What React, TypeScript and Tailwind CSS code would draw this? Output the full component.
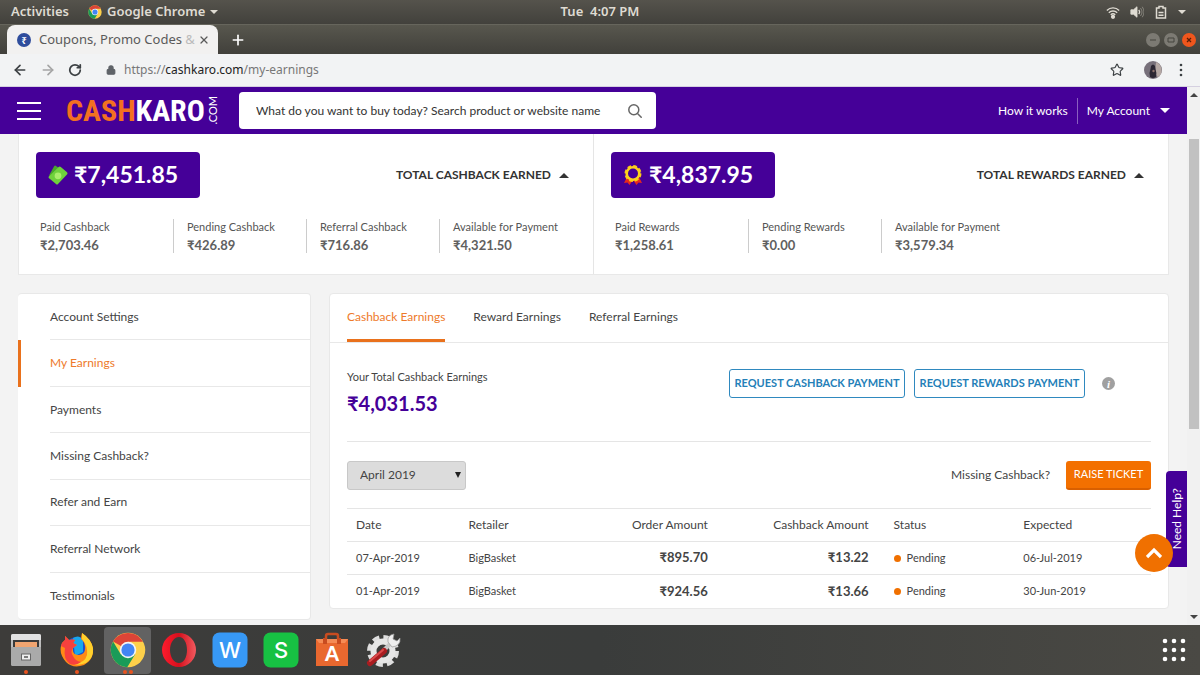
import React, { useState } from 'react';
import { ArrowLeft, ArrowRight, Lock, Plus, RotateCw, Star, X } from 'lucide-react';

type Stat = {
  label: string;
  value: string;
};

type Earning = {
  date: string;
  retailer: string;
  order: string;
  cashback: string;
  status: string;
  expected: string;
};

const cashbackStats: Stat[] = [
  { label: 'Paid Cashback', value: '₹2,703.46' },
  { label: 'Pending Cashback', value: '₹426.89' },
  { label: 'Referral Cashback', value: '₹716.86' },
  { label: 'Available for Payment', value: '₹4,321.50' },
];

const rewardStats: Stat[] = [
  { label: 'Paid Rewards', value: '₹1,258.61' },
  { label: 'Pending Rewards', value: '₹0.00' },
  { label: 'Available for Payment', value: '₹3,579.34' },
];

const menuItems = [
  'Account Settings',
  'My Earnings',
  'Payments',
  'Missing Cashback?',
  'Refer and Earn',
  'Referral Network',
  'Testimonials',
];

const tabs = ['Cashback Earnings', 'Reward Earnings', 'Referral Earnings'];

const earnings: Earning[] = [
  { date: '07-Apr-2019', retailer: 'BigBasket', order: '₹895.70', cashback: '₹13.22', status: 'Pending', expected: '06-Jul-2019' },
  { date: '01-Apr-2019', retailer: 'BigBasket', order: '₹924.56', cashback: '₹13.66', status: 'Pending', expected: '30-Jun-2019' },
];

const Caret = ({ className, up }: { className: string; up?: boolean }) => (
  <svg className={className} viewBox="0 0 10 5" fill="currentColor" aria-hidden="true">
    <path d={up ? 'M0 5 5 0l5 5z' : 'M0 0h10L5 5z'} />
  </svg>
);

const ChromeLogo = ({ className }: { className: string }) => (
  <svg className={className} viewBox="0 0 48 48" aria-hidden="true">
    <circle cx="24" cy="24" r="23" fill="#fdd04a" />
    <path d="M24 24 4.1 12.5A23 23 0 0 1 43.9 13H24z" fill="#dc4437" />
    <path d="M4.1 12.5A23 23 0 0 0 23 47l10.5-17.5L24 24 14.5 30z" fill="#1a9b58" />
    <circle cx="24" cy="24" r="11" fill="#f4f4f4" />
    <circle cx="24" cy="24" r="8.800" fill="#4285f4" />
  </svg>
);

const SystemBar = () => (
  <div className="grid h-6 grid-cols-3 items-center bg-linear-to-b from-[#55534c] to-[#42413c] px-[11px] text-[13px] font-semibold text-[#dfdbd2]">
    <div className="flex items-center gap-[19px]">
      <button>Activities</button>
      <button className="flex items-center gap-[5px]">
        <ChromeLogo className="h-3.5 w-3.5" />
        Google Chrome
        <Caret className="h-1 w-2" />
      </button>
    </div>
    <time className="text-center whitespace-pre">Tue  4:07 PM</time>
    <div className="flex items-center justify-end gap-2.5 pr-[3px]">
      <svg className="h-3.5 w-3.5" viewBox="0 0 16 16" fill="none" stroke="currentColor" strokeWidth="1.600" aria-label="Wi-Fi">
        <path d="M1 6.200a10 10 0 0 1 14 0M3.200 8.800a7 7 0 0 1 9.600 0M5.400 11.200a4 4 0 0 1 5.200 0" />
        <circle cx="8" cy="13.500" r="1.600" fill="currentColor" />
      </svg>
      <svg className="h-3.5 w-3.5" viewBox="0 0 16 16" fill="none" stroke="currentColor" aria-label="Volume">
        <path d="M1 5.500h3L8 2v12l-4-3.500H1z" fill="currentColor" />
        <path d="M10 5.500q2 2.500 0 5" strokeWidth="1.400" />
        <path d="M12 3.500q3.500 4.500 0 9M14 2q4 6 0 12" opacity=".45" />
      </svg>
      <svg className="h-3.5 w-3.5" viewBox="0 0 14 14" fill="none" stroke="currentColor" strokeWidth="1.500" aria-label="Battery">
        <path d="M2.500 3H5V1.500h4V3h2.500v10h-9zM4.500 7.500h5M4.500 10.250h5" />
      </svg>
      <Caret className="h-1 w-2" />
    </div>
  </div>
);

const TabStrip = () => (
  <div className="flex h-[30px] items-stretch border-t border-[#66655c] bg-linear-to-b from-[#58574e] to-[#41403b] pr-1 pl-[7px]">
    <div className="flex w-[211px] items-center rounded-t-lg bg-[#f2f1f0] pr-2 pl-2.5 text-[#5a5a5a]">
      <svg className="h-3.5 w-3.5 shrink-0" viewBox="0 0 14 14" aria-hidden="true">
        <circle cx="7" cy="7" r="7" fill="#2f4d9c" />
        <text x="7" y="10.500" textAnchor="middle" fontSize="9" fontWeight="700" fill="#fff">₹</text>
      </svg>
      <span className="ml-2 min-w-0 flex-1 overflow-hidden text-[13px] whitespace-nowrap">
        Coupons, Promo Codes <span className="text-[#bbb]">&amp;</span>
      </span>
      <button aria-label="Close tab">
        <X className="h-3 w-3" strokeWidth={2.5} />
      </button>
    </div>
    <button className="ml-3 text-white" aria-label="New tab">
      <Plus className="h-4 w-4" strokeWidth={2.5} />
    </button>
    <div className="ml-auto flex items-center gap-1">
      <button className="flex h-3.5 w-3.5 items-center justify-center rounded-full bg-[#7c7a73] text-[#45443f]" aria-label="Minimize">
        <svg className="h-2 w-2" viewBox="0 0 8 8" stroke="currentColor"><path d="M1 4h6" /></svg>
      </button>
      <button className="flex h-3.5 w-3.5 items-center justify-center rounded-full bg-[#7c7a73] text-[#45443f]" aria-label="Maximize">
        <svg className="h-2 w-2" viewBox="0 0 8 8" fill="none" stroke="currentColor"><path d="M1 2h6v4H1z" /></svg>
      </button>
      <button className="flex h-3.5 w-3.5 items-center justify-center rounded-full bg-[#f0561d] text-[#5a1d06]" aria-label="Close">
        <svg className="h-2 w-2" viewBox="0 0 8 8" stroke="currentColor" strokeWidth="1.300"><path d="m2 2 4 4M6 2 2 6" /></svg>
      </button>
    </div>
  </div>
);

const Toolbar = () => (
  <div className="flex h-[33px] items-center border-b border-[#d5d0e0] bg-[#f2f3f4] px-3 text-[#3c4043]">
    <button aria-label="Back"><ArrowLeft className="h-4 w-4" strokeWidth={2.5} /></button>
    <button className="ml-3 text-[#a5a5a5]" aria-label="Forward"><ArrowRight className="h-4 w-4" strokeWidth={2.5} /></button>
    <button className="ml-3" aria-label="Reload"><RotateCw className="h-3.5 w-3.5" strokeWidth={3} /></button>
    <Lock className="ml-6 h-2.5 w-2.5 text-[#5f6368]" fill="currentColor" strokeWidth={3} />
    <div
      className="ml-2 flex-1 text-[12px] text-[#777]"
      role="textbox"
      aria-label="Address"
      contentEditable
      suppressContentEditableWarning
    >
      https://<span className="text-[#222]">cashkaro.com</span>/my-earnings
    </div>
    <button aria-label="Bookmark"><Star className="h-3.5 w-3.5" /></button>
    <button className="mr-3 ml-5" aria-label="Profile">
      <svg className="h-[18px] w-[18px]" viewBox="0 0 18 18">
        <circle cx="9" cy="9" r="9" fill="#77707a" />
        <path d="M12 1a9 9 0 0 1 2 15.500L11 12z" fill="#b5a8a4" />
        <path d="M7 5q2-3 4 0l.5 3q1.500 4 .5 8-3 2-6 0-1-5 .5-8z" fill="#2c2733" />
        <circle cx="9.500" cy="10" r="1.200" fill="#8b6f6b" />
      </svg>
    </button>
    <button aria-label="Menu">
      <svg className="h-3.5 w-3.5" viewBox="0 0 14 14" fill="currentColor">
        <circle cx="7" cy="2" r="1.300" />
        <circle cx="7" cy="7" r="1.300" />
        <circle cx="7" cy="12" r="1.300" />
      </svg>
    </button>
  </div>
);

const SiteHeader = () => (
  <header className="flex h-[47px] items-center bg-[#450098] px-[17px] text-[12px] text-white">
    <button className="flex w-6 flex-col gap-1.5" aria-label="Open menu">
      <span className="h-0.5 w-full bg-white" />
      <span className="h-0.5 w-full bg-white" />
      <span className="h-0.5 w-full bg-white" />
    </button>
    <a href="#home" className="ml-[25px] flex w-[153px] items-center justify-between" aria-label="CashKaro.com">
      <span className="font-['Roboto_Condensed','Open_Sans_Condensed','Liberation_Sans',sans-serif] text-[30px] leading-8 font-bold">
        <span className="text-[#f37021]">CASH</span>KARO
      </span>
      <span className="rotate-180 text-[11px] leading-3 [writing-mode:vertical-rl]">.COM</span>
    </a>
    <form className="ml-5 flex h-[37px] w-[417px] items-center rounded bg-white pr-3.5 pl-[17px]">
      <input
        type="search"
        aria-label="Search"
        placeholder="What do you want to buy today? Search product or website name"
        className="min-w-0 flex-1 bg-transparent text-[12px] outline-none placeholder:text-[#333]"
      />
      <button type="button" className="text-[#666]" aria-label="Submit search">
        <svg className="h-3.5 w-3.5" viewBox="0 0 14 14" fill="none" stroke="currentColor" strokeWidth="1.500">
          <circle cx="5.800" cy="5.800" r="5" />
          <path d="m9.500 9.500 4.200 4.200" />
        </svg>
      </button>
    </form>
    <nav className="ml-auto flex items-center">
      <a href="#how" className="pr-[9px]">How it works</a>
      <button className="flex h-[26px] items-center gap-2.5 border-l border-[#8a5fc0] pl-[9px]">
        My Account
        <Caret className="h-[5px] w-2.5" />
      </button>
    </nav>
  </header>
);

const MoneyIcon = () => (
  <svg className="h-5 w-5" viewBox="0 0 20 20" aria-hidden="true">
    <path d="M1 10.500 6 1.500q1-1.500 2-.5l3 2-6 9z" fill="#4aa52c" />
    <path d="M.8 11.500 11 1.800q1-.8 1.800.2l6.200 5.200q1 1 .2 2L10 19q-1 1-2 0l-7.200-6q-.6-.8 0-1.500z" fill="#6fd13c" />
    <circle cx="10" cy="10.800" r="3.400" fill="#a9ee6b" />
  </svg>
);

const RibbonIcon = () => (
  <svg className="h-5 w-5" viewBox="0 0 20 20" aria-hidden="true">
    <path d="m4 12-3 6 3.500-.5L6.500 20 10 15l3.500 5 2-2.500 3.500.5-3-6z" fill="#e8291c" />
    <circle cx="10" cy="8.500" r="7" fill="none" stroke="#fcc917" strokeWidth="3" strokeDasharray="3.500 2" />
    <circle cx="10" cy="8.500" r="6.300" fill="#450098" stroke="#fcd21d" strokeWidth="2.600" />
  </svg>
);

type SummaryProps = {
  icon: React.ReactNode;
  amount: string;
  title: string;
  stats: Stat[];
};

const Summary = ({ icon, amount, title, stats }: SummaryProps) => (
  <section className="min-w-0 flex-1 pt-[18px] pr-6 pb-[21px] pl-[17px]">
    <div className="flex items-center justify-between">
      <div className="flex h-[46px] w-[164px] items-center gap-1.5 rounded bg-[#450098] pl-3 text-white">
        {icon}
        <span className="pb-0.5 text-[23px] leading-8 font-bold">{amount}</span>
      </div>
      <button className="flex items-center gap-2 text-[12px] font-bold text-[#333]">
        {title}
        <Caret up className="h-[5px] w-2.5" />
      </button>
    </div>
    <dl className="mt-[21px] flex pl-1">
      {stats.map((stat, i) => (
        <div
          key={stat.label}
          className={`${i > 0 ? 'border-l border-[#ccc] pl-[13px]' : ''} ${i < 3 ? 'w-[133px] shrink-0' : 'min-w-0 flex-1'}`}
        >
          <dt className="text-[11px] leading-4 whitespace-nowrap text-[#555]">{stat.label}</dt>
          <dd className="pt-0.5 text-[13px] leading-4 font-bold text-[#606060]">{stat.value}</dd>
        </div>
      ))}
    </dl>
  </section>
);

const Sidebar = () => {
  const [active, setActive] = useState('My Earnings');

  return (
    <nav className="flex w-[293px] shrink-0 flex-col rounded-sm border border-l-0 border-[#e8e8e8] bg-white text-[12px]">
      {menuItems.map((item, i) => (
        <a
          key={item}
          href="#menu"
          onClick={() => setActive(item)}
          className={`flex flex-1 border-l-[3px] pl-[29px] ${
            active === item ? 'border-[#e9711c] text-[#ee7a2b]' : 'border-transparent text-[#444]'
          }`}
        >
          <span className={`flex min-h-11 flex-1 items-center ${i < menuItems.length - 1 ? 'border-b border-[#e8e8e8]' : ''}`}>
            {item}
          </span>
        </a>
      ))}
    </nav>
  );
};

const EarningsTable = () => (
  <table className="w-full table-fixed border-t border-[#e5e5e5] text-left text-[#444]">
    <colgroup>
      <col className="w-[14%]" />
      <col className="w-[16%]" />
      <col className="w-[16%]" />
      <col className="w-[20%]" />
      <col className="w-[17%]" />
      <col className="w-[17%]" />
    </colgroup>
    <thead>
      <tr className="h-[33px] border-b border-[#e5e5e5] text-[12px] whitespace-nowrap">
        <th className="px-[9px] font-normal">Date</th>
        <th className="px-[9px] font-normal">Retailer</th>
        <th className="px-[9px] text-right font-normal">Order Amount</th>
        <th className="px-[9px] text-right font-normal">Cashback Amount</th>
        <th className="pl-4 font-normal">Status</th>
        <th className="px-[9px] font-normal">Expected</th>
      </tr>
    </thead>
    <tbody>
      {earnings.map((row) => (
        <tr key={row.date} className="h-[33px] border-b border-[#e5e5e5] text-[11px] last:border-b-0">
          <td className="px-[9px]">{row.date}</td>
          <td className="px-[9px]">{row.retailer}</td>
          <td className="px-[9px] text-right text-[13px] font-bold">{row.order}</td>
          <td className="px-[9px] text-right text-[13px] font-bold">{row.cashback}</td>
          <td className="pl-4">
            <span className="flex items-center gap-1.5">
              <span className="h-[7px] w-[7px] rounded-full bg-[#f07000]" />
              {row.status}
            </span>
          </td>
          <td className="px-[9px]">{row.expected}</td>
        </tr>
      ))}
    </tbody>
  </table>
);

const EarningsPanel = () => {
  const [activeTab, setActiveTab] = useState(tabs[0]);

  return (
    <section className="min-w-0 flex-1 self-start rounded-sm border border-[#e8e8e8] bg-white">
      <div className="flex h-[49px] gap-7 border-b border-[#e8e8e8] px-[17px] text-[12px]">
        {tabs.map((tab) => (
          <button
            key={tab}
            onClick={() => setActiveTab(tab)}
            className={`border-b-[3px] ${
              activeTab === tab ? 'border-[#e9711c] text-[#ee7a2b]' : 'border-transparent text-[#444]'
            }`}
          >
            {tab}
          </button>
        ))}
      </div>
      <div className="px-[17px]">
        <div className="flex h-[99px] items-start justify-between border-b border-[#e5e5e5] pt-[26px] pr-9">
          <div>
            <p className="text-[11px] leading-4 text-[#444]">Your Total Cashback Earnings</p>
            <p className="pt-1.5 text-[20px] leading-6 font-bold text-[#450098]">₹4,031.53</p>
          </div>
          <div className="flex items-center gap-[9px] text-[11px] font-bold text-[#2480b8]">
            <button className="h-[29px] w-44 rounded-[3px] border border-[#2f89bf]">REQUEST CASHBACK PAYMENT</button>
            <button className="h-[29px] w-[171px] rounded-[3px] border border-[#2f89bf]">REQUEST REWARDS PAYMENT</button>
            <button className="ml-2 h-[13px] w-[13px] rounded-full bg-[#a0a0a0] font-['Liberation_Serif'] text-[11px] leading-3 font-bold text-white italic" aria-label="Payment info">
              i
            </button>
          </div>
        </div>
        <div className="flex h-[66px] items-center justify-between text-[12px] text-[#444]">
          <div className="relative">
            <select
              aria-label="Month"
              className="h-[29px] w-[119px] appearance-none rounded-[3px] border border-[#c8c8c8] bg-[#dcdcdc] pl-3"
            >
              <option>April 2019</option>
              <option>March 2019</option>
            </select>
            <svg className="pointer-events-none absolute top-[11px] right-1 h-1.5 w-2" viewBox="0 0 8 6" fill="#222" aria-hidden="true">
              <path d="M1 0h6L4 6z" />
            </svg>
          </div>
          <div className="flex items-center gap-4">
            <span>Missing Cashback?</span>
            <button className="h-[29px] w-[85px] rounded-[3px] border-b-2 border-[#d95f00] bg-[#f37000] text-[11px] text-white">
              RAISE TICKET
            </button>
          </div>
        </div>
        <EarningsTable />
      </div>
    </section>
  );
};

const ScrollBar = () => (
  <div className="flex w-[13px] shrink-0 flex-col items-center bg-[#f1f1f1] text-[#444]" aria-hidden="true">
    <Caret up className="mt-1.5 h-1 w-2" />
    <div className="mt-[42px] h-3/5 max-h-[290px] w-2.5 bg-[#c1c1c1]" />
    <Caret className="mt-auto mb-1.5 h-1 w-2" />
  </div>
);

const FilesIcon = () => (
  <svg className="h-9 w-9" viewBox="0 0 36 36">
    <rect x="3" y="2" width="30" height="32" rx="2" fill="#bdbdbd" />
    <path d="M3 4q0-2 2-2h26q2 0 2 2v4H3z" fill="#e2e2e2" />
    <path d="M5 8h26v7H5z" fill="#3a3a3a" />
    <path d="M7 10h22v5H7z" fill="#f0a470" />
    <path d="M3 15h30v17q0 2-2 2H5q-2 0-2-2z" fill="#aaa" />
    <rect x="13.500" y="22" width="9" height="6" fill="#eee" stroke="#666" />
    <path d="M16 25h4" stroke="#555" strokeWidth="1.500" />
  </svg>
);

const FirefoxIcon = () => (
  <svg className="h-9 w-9" viewBox="0 0 36 36">
    <circle cx="18" cy="18" r="13" fill="#1b4fd0" />
    <path d="M14 6q6-4 10 2v12l-8 4z" fill="#18a7ee" />
    <path d="M23 1q9 6 11 15 1 12-9 17-11 4-18-3Q0 22 2 14q1-4 4-6l0-4 4 4q4-1 6 0-1 2-2 3l4 2-4 3q-1 7 6 7 7-1 6-9-1-5-4-7 0-3 1-6z" fill="#ff8a16" />
    <path d="M23 1q9 6 11 15 1 10-7 15-8 3-12 1 11-1 13-9 1-9-5-16 0-3 0-6z" fill="#ffd02c" />
    <path d="M2 14q1-4 4-6l0-4 4 4q4-1 6 0-1 2-2 3l4 2-4 3q-3 4 0 8 2 5 8 6-5 4-11 2-7-5-5-16z" fill="#f6413e" />
  </svg>
);

const OperaIcon = () => (
  <svg className="h-9 w-9" viewBox="0 0 36 36">
    <defs>
      <linearGradient id="opera" x1="0" y1="0" x2="1" y2="0">
        <stop offset="0" stopColor="#ff1b2d" />
        <stop offset=".5" stopColor="#d5101d" />
        <stop offset="1" stopColor="#f25a5f" />
      </linearGradient>
    </defs>
    <path d="M18 1a17 17 0 1 0 0 34 17 17 0 0 0 0-34zm0 4c5 0 8 6 8 13s-3 13-8 13-9-6-9-13 4-13 9-13z" fill="url(#opera)" fillRule="evenodd" />
  </svg>
);

const LetterIcon = ({ letter, color }: { letter: string; color: string }) => (
  <svg className="h-9 w-9" viewBox="0 0 36 36">
    <rect x=".5" y=".5" width="35" height="35" rx="7" fill={color} />
    <text x="18" y="26" textAnchor="middle" fontSize="22" fontFamily="Inter, sans-serif" fontWeight="500" fill="#fff">{letter}</text>
  </svg>
);

const SoftwareIcon = () => (
  <svg className="h-9 w-9" viewBox="0 0 36 36">
    <path d="M12 8V4q0-2 2-2h8q2 0 2 2v4" fill="none" stroke="#c84c20" strokeWidth="2.500" />
    <path d="M2 7h32v27H2z" fill="#e9682f" />
    <path d="M2 7h32l-3 4H5z" fill="#f58b55" />
    <path d="M9 6h4v6H9zM23 6h4v6h-4z" fill="#c84c20" />
    <text x="18" y="29" textAnchor="middle" fontSize="20" fontFamily="Lato, sans-serif" fontWeight="900" fill="#fff">A</text>
  </svg>
);

const SettingsIcon = () => (
  <svg className="h-9 w-9" viewBox="0 0 36 36">
    <circle cx="18" cy="19" r="13.500" fill="none" stroke="#dedede" strokeWidth="5" strokeDasharray="6.600 4" />
    <circle cx="18" cy="19" r="9.500" fill="none" stroke="#e6e6e6" strokeWidth="6" />
    <path d="m17 20 9-9" stroke="#c9c9c9" strokeWidth="4" />
    <path d="M23 10q-1-7 6-8l-1 5 4 2 3-3q1 8-8 9z" fill="#eee" stroke="#999" strokeWidth=".7" />
    <path d="m5 31 14-12" stroke="#a91c20" strokeWidth="6" strokeLinecap="round" />
    <path d="m5 29 13-11" stroke="#db4a4b" strokeWidth="2" strokeLinecap="round" />
  </svg>
);

const dockApps = [
  { name: 'Files', icon: <FilesIcon />, windows: 1 },
  { name: 'Firefox', icon: <FirefoxIcon />, windows: 1 },
  { name: 'Chrome', icon: <ChromeLogo className="h-9 w-9" />, windows: 2 },
  { name: 'Opera', icon: <OperaIcon />, windows: 0 },
  { name: 'Writer', icon: <LetterIcon letter="W" color="#3798f5" />, windows: 0 },
  { name: 'Spreadsheets', icon: <LetterIcon letter="S" color="#17c143" />, windows: 0 },
  { name: 'Software', icon: <SoftwareIcon />, windows: 0 },
  { name: 'Settings', icon: <SettingsIcon />, windows: 0 },
];

const Dock = () => (
  <footer className="flex h-[50px] items-center gap-1 bg-linear-to-r from-[#3d3c3a] via-[#3a3c3b] to-[#4a4944] pr-3.5 pl-0.5">
    {dockApps.map((app) => (
      <button
        key={app.name}
        aria-label={app.name}
        className={`relative flex h-[47px] w-[47px] items-center justify-center rounded-sm ${app.name === 'Chrome' ? 'bg-[#626262]' : ''}`}
      >
        {app.icon}
        <span className="absolute inset-x-0 bottom-0 flex justify-center gap-0.5">
          {Array.from({ length: app.windows }, (_, i) => (
            <span key={i} className="h-1 w-1 rounded-full bg-[#e95420]" />
          ))}
        </span>
      </button>
    ))}
    <button className="ml-auto" aria-label="Show applications">
      <svg className="h-6 w-6" viewBox="0 0 24 24" fill="#fff">
        {[3, 12, 21].map((y) => [3, 12, 21].map((x) => <circle key={`${x}-${y}`} cx={x} cy={y} r="2.300" />))}
      </svg>
    </button>
  </footer>
);

const App = () => (
  <div className="flex min-h-screen flex-col font-['Lato','Noto_Sans',sans-serif]">
    <div className="font-['Noto_Sans',sans-serif]">
      <SystemBar />
      <TabStrip />
      <Toolbar />
    </div>
    <div className="flex flex-1">
      <div className="relative flex min-w-0 flex-1 flex-col bg-[#f3f3f3]">
        <SiteHeader />
        <main className="flex flex-1 flex-col gap-[18px] px-[18px] pb-[5px]">
          <div className="flex divide-x divide-[#e5e5e5] border border-t-0 border-[#e8e8e8] bg-white">
            <Summary icon={<MoneyIcon />} amount="₹7,451.85" title="TOTAL CASHBACK EARNED" stats={cashbackStats} />
            <Summary icon={<RibbonIcon />} amount="₹4,837.95" title="TOTAL REWARDS EARNED" stats={rewardStats} />
          </div>
          <div className="flex flex-1 gap-[18px]">
            <Sidebar />
            <EarningsPanel />
          </div>
        </main>
        <button className="absolute right-0 bottom-[58px] flex h-24 w-[21px] items-center justify-center rounded-l-sm bg-[#450098] text-[12px] text-white">
          <span className="rotate-180 [writing-mode:vertical-rl]">Need Help?</span>
        </button>
        <button
          className="absolute right-3.5 bottom-[53px] flex h-[38px] w-[38px] items-center justify-center rounded-full bg-[#f07000] text-white"
          aria-label="Back to top"
        >
          <svg className="h-4 w-4" viewBox="0 0 16 16" fill="none" stroke="currentColor" strokeWidth="3.200">
            <path d="m1 12 7-7 7 7" />
          </svg>
        </button>
      </div>
      <ScrollBar />
    </div>
    <Dock />
  </div>
);

export default App;
